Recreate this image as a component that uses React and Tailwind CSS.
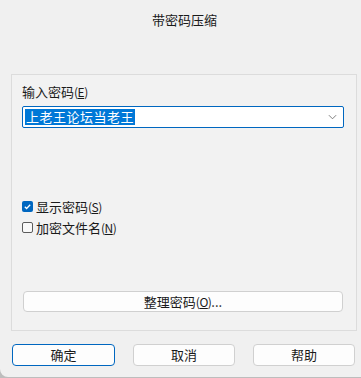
import React from 'react';

const font = { fontFamily: '"Noto Sans CJK SC", "Microsoft YaHei", sans-serif' };

function Key({ k }) {
  return (
    <span className="text-[12px] tracking-[-0.5px]">(<span className="underline underline-offset-1">{k}</span>)</span>
  );
}

function Check({ checked, label, k }) {
  return (
    <label className="flex items-center h-[21px] text-[13px] text-[#1a1a1a]">
      {checked ? (
        <span className="w-[11px] h-[11px] rounded-[2px] bg-[#0067c0] flex items-center justify-center">
          <svg viewBox="0 0 10 10" className="w-[9px] h-[9px]" fill="none" stroke="white" strokeWidth="1.4">
            <path d="M2 5.2l2 2L8 3" />
          </svg>
        </span>
      ) : (
        <span className="w-[11px] h-[11px] rounded-[2px] border border-[#5c5c5c] bg-[#f9f9f9]" />
      )}
      <span className="ml-[3px] leading-[16px]">{label}<Key k={k} /></span>
    </label>
  );
}

export default function App() {
  return (
    <div className="w-[361px] h-[378px] bg-[#bdbdbd]">
      <div className="w-[361px] h-[377px] bg-[#f0f0f0] flex flex-col rounded-bl-[8px] overflow-hidden" style={font}>
        <div className="pt-[10px] pl-[8px] h-[74px] text-center text-[13px] leading-[20px] text-[#1a1a1a]">带密码压缩</div>

        <div className="ml-[11px] mr-[4px] h-[257px] border border-[#dcdcdc] bg-[#f2f2f2] flex flex-col pl-[10px] pr-[12px] pt-[9px]">
          <div className="text-[13px] leading-[16px] text-[#1a1a1a]">输入密码<Key k="E" /></div>
          <div className="mt-[6px] h-[22px] border border-[#0067c0] rounded-[2px] bg-white flex items-center pl-[2px] pr-[6px]">
            <span className="bg-[#0078d7] text-white text-[13px] leading-[16px] px-[1px] tracking-[0.5px]">上老王论坛当老王</span>
            <svg viewBox="0 0 10 6" className="ml-auto w-[9px] h-[6px]" fill="none" stroke="#707070" strokeWidth="1">
              <path d="M1 1l4 4 4-4" />
            </svg>
          </div>

          <div className="mt-[68px] flex flex-col">
            <Check checked label="显示密码" k="S" />
            <Check label="加密文件名" k="N" />
          </div>

          <button className="mt-[53px] ml-[1px] mr-[1px] h-[21px] rounded-[4px] border border-[#d0d0d0] bg-[#fdfdfd] text-[13px] leading-[16px] text-[#1a1a1a]">
            整理密码<Key k="O" />...
          </button>
        </div>

        <div className="mt-[13px] flex pl-[12px] gap-[18px]">
          <button className="w-[103px] h-[22px] rounded-[4px] border border-[#0067c0] bg-[#fdfdfd] text-[13px] text-[#1a1a1a]">确定</button>
          <button className="w-[102px] h-[22px] rounded-[4px] border border-[#d0d0d0] bg-[#fdfdfd] text-[13px] text-[#1a1a1a]">取消</button>
          <button className="w-[102px] h-[22px] rounded-[4px] border border-[#d0d0d0] bg-[#fdfdfd] text-[13px] text-[#1a1a1a]">帮助</button>
        </div>
      </div>
    </div>
  );
}
